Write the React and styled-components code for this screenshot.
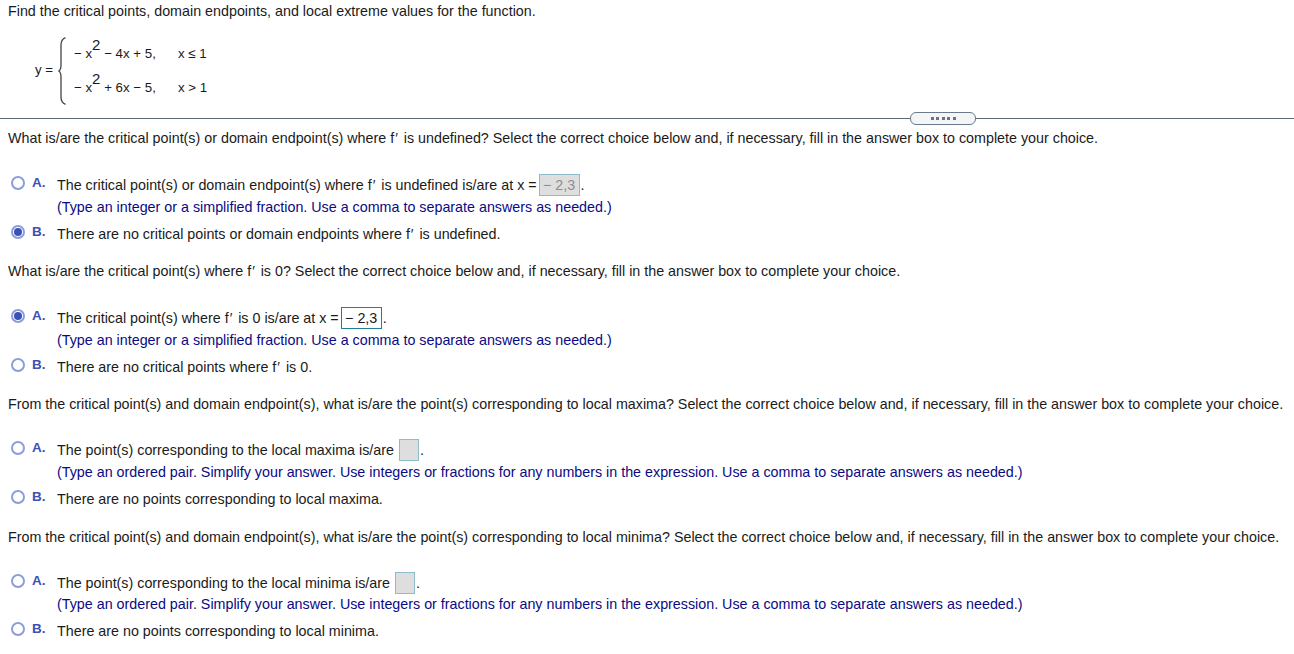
import React from 'react'
import styled, { createGlobalStyle } from 'styled-components'

const GlobalStyle = createGlobalStyle`
  html, body {
    margin: 0;
    padding: 0;
    background: #fff;
  }
  body {
    font-family: 'Liberation Sans', Arial, sans-serif;
    font-size: 14.3px;
    line-height: 16px;
    color: #1a1a1a;
  }
`

const Page = styled.div`
  width: 1294px;
  height: 654px;
  overflow: hidden;
`

const Header = styled.div`
  padding: 3px 0 0 8px;
  height: 17px;
`

// Piecewise formula
const Formula = styled.div`
  display: flex;
  align-items: center;
  height: 68px;
  margin-top: 17px;
  padding-left: 35px;
  font-size: 13.3px;
`

const FormulaLabel = styled.span`
  width: 23px;
  position: relative;
  top: -1px;
`

const Brace = styled.svg`
  width: 8px;
  height: 68px;
  margin-right: 8px;
  flex: none;
`

const Cases = styled.div`
  display: grid;
  grid-template-columns: 104px auto;
  grid-auto-rows: 34px;
  align-items: center;
`

const Expr = styled.span`
  white-space: pre;
`

const Sup = styled.span`
  display: inline-block;
  line-height: 0;
  font-size: 15px;
  transform: translateY(-8px);
`

const Divider = styled.div`
  position: relative;
  height: 1px;
  background: #5f6b76;
  margin-top: 13px;
`

const Handle = styled.div`
  position: absolute;
  left: 910px;
  top: -6px;
  width: 64px;
  height: 11px;
  border: 1px solid #6b7a8a;
  border-radius: 6px;
  background: #f3f5f7;
  display: flex;
  align-items: center;
  justify-content: center;
  gap: 2.5px;
`

const Dot = styled.i`
  width: 3px;
  height: 3px;
  background: #6b7480;
`

const Question = styled.div`
  padding-left: 8px;
  height: 16px;
  white-space: nowrap;
  margin-top: ${({ $top }) => $top}px;
`

const Choice = styled.div`
  display: grid;
  grid-template-columns: 32px 25px 1fr;
  align-items: center;
  margin-top: ${({ $top }) => $top}px;
  min-height: 16px;
  white-space: nowrap;
`

const Radio = styled.span`
  justify-self: end;
  width: 14px;
  height: 14px;
  margin-right: 7px;
  box-sizing: border-box;
  border-radius: 50%;
  border: 2px solid #8c9ddb;
  background: #fff;
  display: flex;
  align-items: center;
  justify-content: center;
  position: relative;
  top: -2px;

  &::after {
    content: '';
    display: ${({ $on }) => ($on ? 'block' : 'none')};
    width: 8px;
    height: 8px;
    border-radius: 50%;
    background: #3a51b5;
  }
`

const Letter = styled.span`
  font-weight: bold;
  font-size: 13.5px;
  color: #3d50b4;
  position: relative;
  top: -2px;
`

const ChoiceText = styled.span`
  display: flex;
  align-items: center;
  white-space: pre;
`

const Hint = styled.div`
  padding-left: 57px;
  height: 16px;
  margin-top: ${({ $top }) => $top}px;
  color: #0a0a84;
  white-space: nowrap;
`

const AnswerBox = styled.span`
  display: inline-block;
  box-sizing: border-box;
  height: 22px;
  line-height: 20px;
  width: ${({ $empty }) => ($empty ? 20 : 41)}px;
  margin-left: ${({ $empty }) => ($empty ? 1 : 2)}px;
  text-align: center;
  border: 1px solid ${({ $active }) => ($active ? '#1f7f97' : '#8fbccb')};
  background: ${({ $active }) => ($active ? '#fff' : '#dedede')};
  color: ${({ $active }) => ($active ? '#1a1a1a' : '#8d8d8d')};
`

const Period = styled.span`
  margin-left: 1px;
`

// the prime sits a little off the f, without changing the run's width
const PrimeMark = styled.span`
  position: relative;
  left: 1px;
`

const Prime = () => <span>f<PrimeMark>′</PrimeMark>&#8201;</span>

const BraceIcon = () => (
  <Brace viewBox="0 0 8 68">
    <path
      d="M7.5 .7 C4 2 3 4 3 8 L3 28 C3 31 2.5 33 .8 34 C2.5 35 3 37 3 40 L3 60 C3 64 4 66 7.5 67.3"
      fill="none"
      stroke="#444"
      strokeWidth="1.3"
    />
  </Brace>
)

const Row = ({ letter, on, top, children }) => (
  <Choice $top={top}>
    <Radio $on={on} />
    <Letter>{letter}.</Letter>
    <ChoiceText>{children}</ChoiceText>
  </Choice>
)

export default function App() {
  return (
    <Page>
      <GlobalStyle />
      <Header>Find the critical points, domain endpoints, and local extreme values for the function.</Header>

      <Formula>
        <FormulaLabel>y =</FormulaLabel>
        <BraceIcon />
        <Cases>
          <Expr>− x<Sup>2</Sup> − 4x + 5,</Expr>
          <Expr>x ≤ 1</Expr>
          <Expr>− x<Sup>2</Sup> + 6x − 5,</Expr>
          <Expr>x &gt; 1</Expr>
        </Cases>
      </Formula>

      <Divider>
        <Handle>
          <Dot /><Dot /><Dot /><Dot /><Dot />
        </Handle>
      </Divider>

      <Question $top={11}>
        What is/are the critical point(s) or domain endpoint(s) where <Prime /> is undefined? Select the correct choice below and, if necessary, fill in the answer box to complete your choice.
      </Question>
      <Row letter="A" top={28}>
        The critical point(s) or domain endpoint(s) where <Prime /> is undefined is/are at x =<AnswerBox>− 2,3</AnswerBox><Period>.</Period>
      </Row>
      <Hint $top={3}>(Type an integer or a simplified fraction. Use a comma to separate answers as needed.)</Hint>
      <Row letter="B" on top={11}>
        There are no critical points or domain endpoints where <Prime /> is undefined.
      </Row>

      <Question $top={21}>
        What is/are the critical point(s) where <Prime /> is 0? Select the correct choice below and, if necessary, fill in the answer box to complete your choice.
      </Question>
      <Row letter="A" on top={28}>
        The critical point(s) where <Prime /> is 0 is/are at x =<AnswerBox $active>− 2,3</AnswerBox><Period>.</Period>
      </Row>
      <Hint $top={3}>(Type an integer or a simplified fraction. Use a comma to separate answers as needed.)</Hint>
      <Row letter="B" top={11}>
        There are no critical points where <Prime /> is 0.
      </Row>

      <Question $top={21}>
        From the critical point(s) and domain endpoint(s), what is/are the point(s) corresponding to local maxima? Select the correct choice below and, if necessary, fill in the answer box to complete your choice.
      </Question>
      <Row letter="A" top={27}>
        The point(s) corresponding to the local maxima is/are <AnswerBox $empty /><Period>.</Period>
      </Row>
      <Hint $top={3}>(Type an ordered pair. Simplify your answer. Use integers or fractions for any numbers in the expression. Use a comma to separate answers as needed.)</Hint>
      <Row letter="B" top={11}>
        There are no points corresponding to local maxima.
      </Row>

      <Question $top={22}>
        From the critical point(s) and domain endpoint(s), what is/are the point(s) corresponding to local minima? Select the correct choice below and, if necessary, fill in the answer box to complete your choice.
      </Question>
      <Row letter="A" top={27}>
        The point(s) corresponding to the local minima is/are <AnswerBox $empty /><Period>.</Period>
      </Row>
      <Hint $top={2}>(Type an ordered pair. Simplify your answer. Use integers or fractions for any numbers in the expression. Use a comma to separate answers as needed.)</Hint>
      <Row letter="B" top={11}>
        There are no points corresponding to local minima.
      </Row>
    </Page>
  )
}
